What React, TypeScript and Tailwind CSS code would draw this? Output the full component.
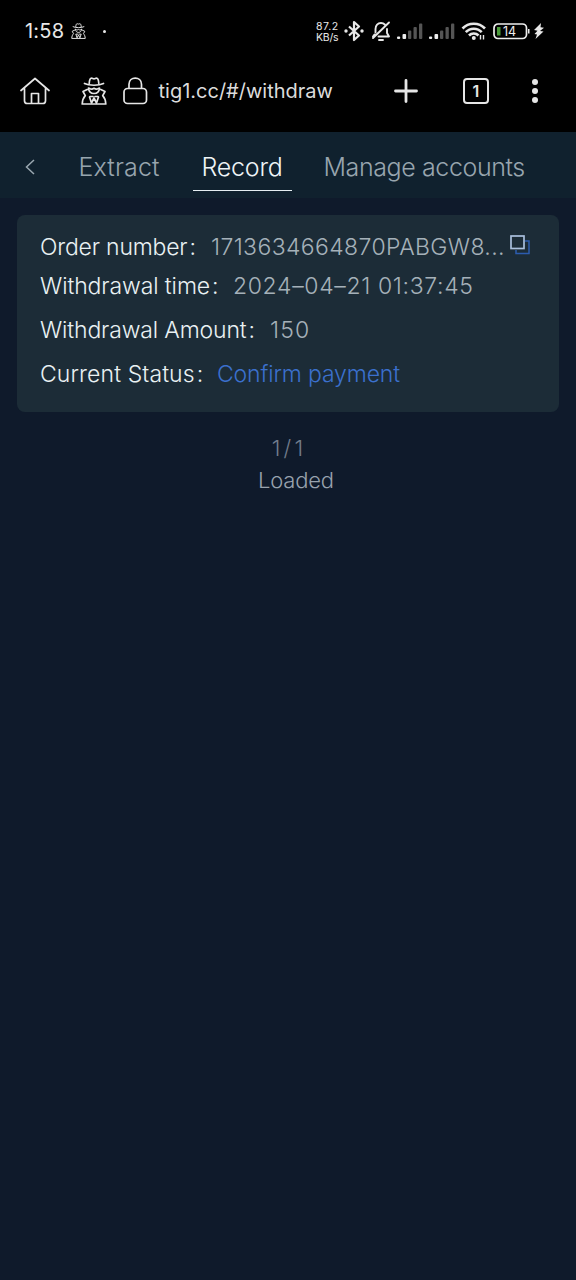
import React from 'react';

const SpyIcon = ({ className }: { className: string }) => (
    <svg viewBox="0 0 26 28" fill="none" stroke="currentColor" strokeWidth="1.7" strokeLinecap="round" strokeLinejoin="round" className={className}>
        <path d="M3.500 6.500c4.500 2.300 14.500 2.300 19 0" />
        <path d="M8.200 6.500C8.400 3.400 9.200 1.200 10.500 1.200c1 0 1.500.7 2.500.7s1.500-.7 2.500-.7c1.300 0 2.100 2.200 2.300 5.300" />
        <path d="M7.500 11c.3 3.400 2.500 5.500 5.500 5.500s5.200-2.100 5.500-5.500" />
        <path d="M8.500 11.300c1.500 1.200 3 1 4.500 0c1.500 1 3 1.200 4.500 0" />
        <path d="M6.200 12.500L2 14.500l2.300 4.200C2.300 20.800 1.400 23.500 1.200 27h23.600c-.2-3.500-1.100-6.200-3.100-8.300L24 14.500l-4.200-2" />
        <path d="M8.500 20l2 6l2.500-5l2.500 5l2-6" />
        <path d="M9 19.500h3M14 19.500h3" />
    </svg>
);

const Signal = () => (
    <svg viewBox="0 0 26 17" className="h-[17px] w-[26px]">
        <rect x="0" y="13.5" width="3.2" height="2.5" rx="1" fill="#eee" />
        <rect x="5.5" y="11" width="3.6" height="5" rx="1" fill="#eee" />
        <rect x="11" y="7.5" width="3.3" height="8.5" rx="1" fill="#555" />
        <rect x="16.5" y="4" width="3.3" height="12" rx="1" fill="#555" />
        <rect x="22" y="0.5" width="3.3" height="15.5" rx="1" fill="#555" />
    </svg>
);

const StatusBar = () => (
    <div className="flex h-[60px] items-center pl-[25px] pt-[2px] text-[#e8e8e8]">
        <span className="w-[46px] text-[20px] tracking-[0.2px]">1:58</span>
        <SpyIcon className="h-[16px] w-[15px]" />
        <span className="ml-[17px] h-[3px] w-[3px] rounded-full bg-[#e8e8e8]" />
        <div className="ml-[210px] w-[28px] pt-[3px] text-[10.5px] leading-[10.5px]">
            <div className="tracking-[0.5px]">87.2</div>
            <div className="tracking-[-0.2px]">KB/s</div>
        </div>
        <svg viewBox="0 0 20 22" fill="none" stroke="currentColor" strokeWidth="2.2" strokeLinejoin="round" className="h-[22px] w-[20px]">
            <path d="M5 6.500l10 9l-5 4.500V2l5 4.500l-10 9" />
            <circle cx="2" cy="11" r="1.7" fill="currentColor" stroke="none" />
            <circle cx="18" cy="11" r="1.7" fill="currentColor" stroke="none" />
        </svg>
        <svg viewBox="0 0 20 22" fill="none" stroke="currentColor" strokeWidth="1.9" strokeLinecap="round" strokeLinejoin="round" className="ml-[7px] h-[22px] w-[20px]">
            <path d="M4.500 12.500V9c0-3.500 2.300-6 5.500-6c1.500 0 2.800.5 3.800 1.500M16 9v4l2 3.500H7.500M3.500 14.500L2 16.500M18 2.500L2 18" />
            <path d="M8 20h4" />
        </svg>
        <div className="ml-[6px] flex gap-[6px] pt-[1px]">
            <Signal />
            <Signal />
        </div>
        <svg viewBox="0 0 26 20" fill="none" stroke="currentColor" strokeWidth="2.6" className="ml-[6px] h-[20px] w-[26px]">
            <path d="M1.500 7.500c6-6.300 16.500-6.300 22.500 0M4.800 11.200c4.300-4.700 11.600-4.700 15.900 0M8 14.500c2.600-2.700 7-2.700 9.500 0" />
            <circle cx="12.800" cy="17" r="2" fill="currentColor" stroke="none" />
            <path d="M19.500 14v4.500M22.500 14v4.500" strokeWidth="1.4" />
        </svg>
        <svg viewBox="0 0 38 17" className="ml-[6px] h-[17px] w-[38px]">
            <rect x="1" y="1" width="32.5" height="14.5" rx="4" fill="none" stroke="#eee" strokeWidth="1.7" />
            <path d="M4 4h3.500v8.500H4z" fill="#4b9b3a" />
            <text x="10" y="12.6" fontSize="12.5" fill="#eee" className="font-[Inter,sans-serif]">14</text>
            <path d="M35 6h1.500v4.500H35z" fill="#eee" />
        </svg>
        <svg viewBox="0 0 10 16" fill="currentColor" className="ml-[3px] h-[16px] w-[10px]">
            <path d="M7 0L0 7l3.500.8L0.500 11l2.500.6L1.500 16l8-7.500l-3.500-.6L10 4.800l-3.500-.6z" />
        </svg>
    </div>
);

const BrowserBar = () => (
    <div className="flex h-[62px] items-center pl-[20px] text-[#e6e6e6]">
        <svg viewBox="0 0 30 28" fill="none" stroke="currentColor" strokeWidth="1.7" strokeLinecap="round" strokeLinejoin="round" className="h-[28px] w-[30px]">
            <path d="M1 13.500L15 1.500l14 12M4.500 11.500v12.200c0 1.800 1 2.800 2.800 2.800h15.400c1.800 0 2.800-1 2.800-2.800V11.500" />
            <path d="M11.500 26v-9.500h7V26" />
        </svg>
        <SpyIcon className="ml-[31px] h-[28px] w-[26px]" />
        <svg viewBox="0 0 26 28" fill="none" stroke="currentColor" strokeWidth="1.7" className="ml-[15px] h-[28px] w-[26px]">
            <rect x="2" y="11.5" width="22.5" height="15" rx="3.5" />
            <path d="M7 11.500V7.300c0-8.200 12.500-8.200 12.500 0v4.200" />
        </svg>
        <span className="ml-[10.5px] w-[234.5px] text-[20px] text-[#dcdcdc]">tig1.cc/#/withdraw</span>
        <svg viewBox="0 0 24 24" fill="none" stroke="currentColor" strokeWidth="2.8" strokeLinecap="round" className="ml-[1px] h-[24px] w-[24px]">
            <path d="M12 1.500v21M1.500 12h21" />
        </svg>
        <div className="ml-[45px] flex h-[26px] w-[26px] items-center justify-center rounded-[4px] border-2 border-[#e6e6e6] text-[16px] font-semibold">1</div>
        <svg viewBox="0 0 8 24" fill="currentColor" className="ml-[42px] h-[24px] w-[8px]">
            <circle cx="4" cy="3" r="3" />
            <circle cx="4" cy="12" r="3" />
            <circle cx="4" cy="21" r="3" />
        </svg>
    </div>
);

const Tabs = () => (
    <div className="flex h-[66px] bg-[#10212e] pl-[25px] text-[25px] font-light leading-[36px] text-[#98a5ae]">
        <svg viewBox="0 0 10 16" fill="none" stroke="#9aa7b0" strokeWidth="1.5" className="mt-[27px] h-[16px] w-[10px]">
            <path d="M9 1L1.500 8L9 15" />
        </svg>
        <span className="ml-[43.5px] mt-[17px] w-[114.5px] whitespace-nowrap tracking-[0.15px]">Extract</span>
        <span className="mt-[17px] h-[42px] w-[99px] border-b border-[#e6eef2] pr-[1px] text-center tracking-[-0.2px] text-[#eef4f7]">Record</span>
        <span className="ml-[31.5px] mt-[17px] whitespace-nowrap tracking-[-0.4px]">Manage accounts</span>
    </div>
);

interface RowProps {
    label: string;
    labelClass: string;
    className: string;
    children: React.ReactNode;
}

const Row = ({ label, labelClass, className, children }: RowProps) => (
    <div className={`flex items-center whitespace-nowrap ${className}`}>
        <span className={`text-[#e9f1f3] ${labelClass}`}>
            {label}<span className="ml-[2px]">:</span>
        </span>
        {children}
    </div>
);

const App = () => {
    return (
        <div className="min-h-[1280px] w-[576px] overflow-hidden bg-[#0f1a2b] font-[Inter,sans-serif]">
            <div className="h-[132px] bg-black">
                <StatusBar />
                <BrowserBar />
            </div>
            <Tabs />
            <div className="ml-[17px] mt-[17px] h-[197px] w-[542px] rounded-[8px] bg-[#1c2c37] pl-[23px] pt-[11px] text-[23px] font-light leading-[30px] text-[#a5b1b9]">
                <Row label="Order number" labelClass="w-[171px] tracking-[-0.2px]" className="h-[42px]">
                    <span className="w-[294px] tracking-[0.38px]">1713634664870PABGW8...</span>
                    <svg viewBox="0 0 20 20" fill="none" className="mb-[4px] ml-[5px] h-[20px] w-[20px]">
                        <path d="M15 6h4v12.500H6V15" stroke="#2c5cae" strokeWidth="1.5" />
                        <rect x="1" y="1" width="13" height="12.5" stroke="#a9bfdc" strokeWidth="1.7" />
                    </svg>
                </Row>
                <Row label="Withdrawal time" labelClass="w-[193px] tracking-[-0.1px]" className="h-[36px]">
                    <span className="tracking-[0.65px]">2024–04–21 01:37:45</span>
                </Row>
                <Row label="Withdrawal Amount" labelClass="w-[230px] tracking-[-0.15px]" className="mt-[4px] h-[44px]">
                    <span className="tracking-[1.2px]">150</span>
                </Row>
                <Row label="Current Status" labelClass="w-[177px] tracking-[0.1px]" className="h-[44px]">
                    <span className="tracking-[-0.15px] text-[#3b70cd]">Confirm payment</span>
                </Row>
            </div>
            <div className="mt-[20px] text-center text-[22px] font-light leading-[32px]">
                <div className="pl-[2px] tracking-[3.2px] text-[#717c8c]">1/1</div>
                <div className="pl-[16px] tracking-[-0.2px] text-[#98a2ae]">Loaded</div>
            </div>
        </div>
    );
};

export default App;
